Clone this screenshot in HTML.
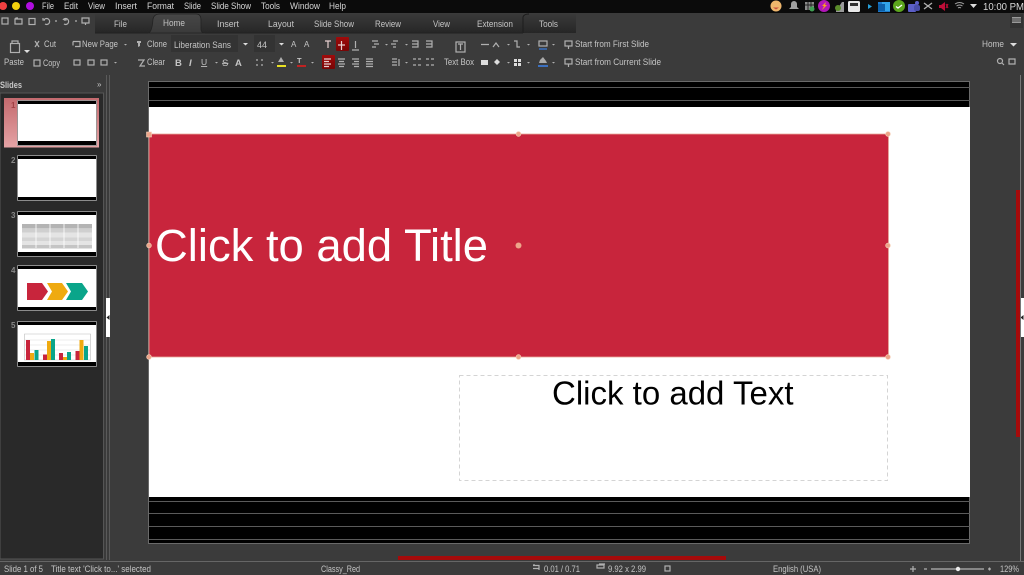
<!DOCTYPE html>
<html><head><meta charset="utf-8"><style>
html,body{margin:0;padding:0;width:1024px;height:575px;overflow:hidden;background:#3b3b3b}
svg{display:block}
text{font-family:"Liberation Sans","Noto Sans CJK SC",sans-serif;font-size:9px;fill:#c4c4c4}
.m text{fill:#d6d6d6}
.ic{stroke:#b0b0b0;stroke-width:1.200;fill:none}
.if{fill:#b0b0b0}
</style></head><body>
<svg width="1024" height="575" viewBox="0 0 1024 575" xmlns="http://www.w3.org/2000/svg">
<defs>
<linearGradient id="tab" x1="0" y1="0" x2="0" y2="1"><stop offset="0" stop-color="#3a3a3a"/><stop offset="1" stop-color="#262626"/></linearGradient>
<linearGradient id="home" x1="0" y1="0" x2="0" y2="1"><stop offset="0" stop-color="#474747"/><stop offset="1" stop-color="#3a3a3a"/></linearGradient>
<linearGradient id="sel" x1="0" y1="0" x2="0" y2="1"><stop offset="0" stop-color="#c46a6e"/><stop offset="1" stop-color="#e5a3a5"/></linearGradient>
<linearGradient id="red" x1="0" y1="0" x2="0" y2="1"><stop offset="0" stop-color="#a00b0b"/><stop offset="1" stop-color="#780606"/></linearGradient>
<filter id="b"><feGaussianBlur stdDeviation="0.35"/></filter>
</defs>
<rect width="1024" height="575" fill="#3b3b3b"/>

<!-- top bar -->
<rect width="1024" height="13" fill="#0b0b0b"/>
<g filter="url(#b)">
<circle cx="3" cy="6" r="4" fill="#f04040"/><circle cx="16" cy="6" r="4" fill="#f2cf0a"/><circle cx="30" cy="6" r="4" fill="#b010e0"/>
<g class="m">
<text x="42" y="9" textLength="12" lengthAdjust="spacingAndGlyphs">File</text>
<text x="64" y="9" textLength="14" lengthAdjust="spacingAndGlyphs">Edit</text>
<text x="88" y="9" textLength="17" lengthAdjust="spacingAndGlyphs">View</text>
<text x="115" y="9" textLength="22" lengthAdjust="spacingAndGlyphs">Insert</text>
<text x="147" y="9" textLength="27" lengthAdjust="spacingAndGlyphs">Format</text>
<text x="184" y="9" textLength="17" lengthAdjust="spacingAndGlyphs">Slide</text>
<text x="211" y="9" textLength="40" lengthAdjust="spacingAndGlyphs">Slide Show</text>
<text x="261" y="9" textLength="19" lengthAdjust="spacingAndGlyphs">Tools</text>
<text x="290" y="9" textLength="30" lengthAdjust="spacingAndGlyphs">Window</text>
<text x="329" y="9" textLength="17" lengthAdjust="spacingAndGlyphs">Help</text>
</g>
<!-- tray -->
<circle cx="776" cy="6" r="5.500" fill="#eeb66c"/><path d="M773 7.500h6l-3 2z" fill="#c8503c"/>
<path d="M789 9h10l-2-2V4a3 3 0 0 0-6 0v3z" fill="#a0a0a0"/>
<rect x="805" y="2" width="9" height="8" fill="#8a8a8a"/><path d="M805 5h9M808 2v8M811 2v6" stroke="#222"/><circle cx="812" cy="9" r="2.500" fill="#3fa052"/>
<circle cx="824" cy="6" r="6" fill="#b016b8"/><path d="M826 2l-4 4h2l-2 4 5-5h-2z" fill="#f5a020"/>
<path d="M836 11l6-9h2v10h-8z" fill="#9a9a9a"/><circle cx="838" cy="8" r="3" fill="#5a8c2a"/>
<rect x="848" y="1" width="12" height="11" rx="1.500" fill="#e8e8e8"/><rect x="850" y="3" width="8" height="3" fill="#333"/>
<path d="M868 4l4 2.500-4 2.500z" fill="#26a0da"/>
<rect x="878" y="2" width="12" height="10" fill="#1c78c8"/><rect x="882" y="2" width="8" height="9" fill="#30a4e8"/><rect x="878" y="4" width="7" height="7" fill="#0f5ea8"/>
<circle cx="899" cy="6" r="6" fill="#5ba61e"/><path d="M896 6.500l2 1.500 4-3" stroke="#fff" stroke-width="1.300" fill="none"/>
<circle cx="917" cy="3" r="2" fill="#5b5fc7"/><rect x="908" y="4" width="8" height="8" rx="1" fill="#5b5fc7"/><rect x="914" y="5" width="6" height="6" rx="2" fill="#4a4ea8"/>
<path d="M924 9l8-6M924 3l8 6" stroke="#b0b0b0" stroke-width="1.300"/>
<path d="M939 5h2l4-3v9l-4-3h-2z" fill="#c01038"/><path d="M946 4l2 4M948 4l-2 4" stroke="#c01038"/>
<path d="M955 4q4.500-3 9 0M956.500 6q3-2 6 0M958 8q1.500-1 3 0" stroke="#a0a0a0" fill="none"/>
<path d="M970 4h7l-3.500 4z" fill="#dcdcdc"/>
<text x="983" y="10" textLength="41" lengthAdjust="spacingAndGlyphs" style="font-size:10px;fill:#d8d8d8">10:00 PM</text>
<!-- quick access -->
<g class="ic"><rect x="2" y="18" width="6" height="6"/><path d="M15 19h7v5h-7zM15 19l1-1h2"/><rect x="29" y="18.500" width="6" height="6"/><path d="M44 20a3 3 0 1 1 1 4M43 18v2h2M55 21h2M64 24a3 3 0 1 0-1-4M66 18v2h-2M75 21h2M82 18h7v5h-7zM85.500 23v2"/></g>
</g>

<!-- tabs -->
<path d="M95 14H576V33H95z" fill="url(#tab)"/>
<path d="M148 33q4 0 5-14q1-5 7-5h36q5 0 5 6v9q0 4 4 4z" fill="url(#home)" stroke="#222" stroke-width=".8"/>
<path d="M523 33v-16q1-3 6-3" stroke="#1c1c1c" fill="none"/>
<path d="M95 33H148M205 33H523" stroke="#222"/>
<g filter="url(#b)">
<text x="114" y="27" textLength="13" lengthAdjust="spacingAndGlyphs">File</text>
<text x="163" y="26" textLength="22" lengthAdjust="spacingAndGlyphs">Home</text>
<text x="217" y="27" textLength="22" lengthAdjust="spacingAndGlyphs">Insert</text>
<text x="268" y="27" textLength="26" lengthAdjust="spacingAndGlyphs">Layout</text>
<text x="314" y="27" textLength="40" lengthAdjust="spacingAndGlyphs">Slide Show</text>
<text x="375" y="27" textLength="26" lengthAdjust="spacingAndGlyphs">Review</text>
<text x="433" y="27" textLength="17" lengthAdjust="spacingAndGlyphs">View</text>
<text x="477" y="27" textLength="36" lengthAdjust="spacingAndGlyphs">Extension</text>
<text x="539" y="27" textLength="19" lengthAdjust="spacingAndGlyphs">Tools</text>
</g>
<rect x="1010" y="14" width="13" height="14" fill="#333"/><path d="M1012 17h9v6h-9z" fill="#999"/><path d="M1012 19h9M1012 21h9" stroke="#444"/>

<!-- toolbar -->
<rect x="171" y="35" width="67" height="17" fill="#333"/>
<rect x="254" y="35" width="21" height="17" fill="#333"/>
<rect x="336" y="37" width="13" height="14" rx="1" fill="url(#red)"/>
<rect x="322" y="55" width="13" height="14" rx="1" fill="url(#red)"/>
<g filter="url(#b)">
<text x="44" y="47" textLength="12" lengthAdjust="spacingAndGlyphs">Cut</text>
<text x="82" y="47" textLength="36" lengthAdjust="spacingAndGlyphs">New Page</text>
<text x="147" y="47" textLength="20" lengthAdjust="spacingAndGlyphs">Clone</text>
<text x="174" y="48" textLength="57" lengthAdjust="spacingAndGlyphs">Liberation Sans</text>
<text x="257" y="48" textLength="10" lengthAdjust="spacingAndGlyphs">44</text>
<text x="4" y="65" textLength="20" lengthAdjust="spacingAndGlyphs">Paste</text>
<text x="43" y="66" textLength="17" lengthAdjust="spacingAndGlyphs">Copy</text>
<text x="147" y="65" textLength="18" lengthAdjust="spacingAndGlyphs">Clear</text>
<text x="444" y="65" textLength="30" lengthAdjust="spacingAndGlyphs">Text Box</text>
<text x="575" y="47" textLength="74" lengthAdjust="spacingAndGlyphs">Start from First Slide</text>
<text x="575" y="65" textLength="86" lengthAdjust="spacingAndGlyphs">Start from Current Slide</text>
<text x="982" y="47" textLength="22" lengthAdjust="spacingAndGlyphs">Home</text>

<g class="ic">
<rect x="10.500" y="43.500" width="9" height="9"/><path d="M12 43v-2h6v2"/>
<path d="M35 41l4 6M39 41l-4 6"/>
<path d="M73 41.500h7v5h-5M73 41.500v4"/>
<rect x="34" y="60" width="6" height="6"/>
<rect x="74" y="60" width="6" height="5"/><rect x="88" y="60" width="6" height="5"/><rect x="101" y="60" width="6" height="5"/>
<path d="M325 41h6M328 41v7M341.500 41v9M338 45h7" stroke="#e8d0d0"/>
<path d="M352 50h7M355.500 41v7"/>
<path d="M372 41h6M374 44h5M372 47h4M393 41h5M391 44h5M393 47h3M412 41h6v6h-6M426 41h6v6h-6M412 44h6M426 44h6"/>
<rect x="456" y="42" width="9" height="10"/><path d="M458 44h5M460.500 44v6"/>
<path d="M481 44.500h8M493 47l3-4 3 4M514 41h3v6h3"/>
<rect x="539" y="41" width="8" height="5"/><path d="M539 49h8" stroke="#3a70c0" stroke-width="1.500"/>
<rect x="565" y="41" width="7" height="5"/><path d="M568.500 46v3"/>
<rect x="565" y="59" width="7" height="5"/><path d="M568.500 64v3"/>
<path d="M256 60h2M261 60h2M256 65h2M261 65h2"/>
<path d="M324 59h7M324 61.500h5M324 64h7M324 66.500h5" stroke="#e8d0d0"/>
<path d="M338 59h7M339 61.500h5M338 64h7M339 66.500h5M352 59h7M354 61.500h5M352 64h7M354 66.500h5M366 59h7M366 61.500h7M366 64h7M366 66.500h7"/>
<path d="M392 59h5M392 62h5M392 65h5M399 59v7M413 59h3M418 59h3M413 65h3M418 65h3M426 59h3M431 59h3M426 65h3M431 65h3"/>
<path d="M138 60h6l-4 6h5"/>
<circle cx="1000" cy="61" r="2.500"/><path d="M1002 63l2 2M1009 59h6v5h-6z"/>
</g>
<text x="175" y="66" style="font-weight:bold;font-size:9.500px">B</text>
<text x="189" y="66" style="font-style:italic;font-weight:bold;font-size:9.500px">I</text>
<text x="201" y="65" style="font-size:8.500px;text-decoration:underline">U</text>
<text x="222" y="66" style="font-size:9.500px;text-decoration:line-through">S</text>
<text x="235" y="66" style="font-weight:bold;font-size:9.500px">A</text>
<text x="291" y="47" style="font-size:8px">A</text>
<text x="304" y="47" style="font-size:8px">A</text>
<path d="M137 41h4v2h-4zM138 43h2v3l-2 1z" class="if"/>
<path d="M278 62l3-5 3 5z" class="if"/><rect x="277" y="65" width="9" height="2" fill="#e8e020"/>
<text x="297" y="63" style="font-size:7.500px;font-weight:bold">T</text><rect x="297" y="65" width="9" height="2" fill="#c02020"/>
<rect x="481" y="60" width="7" height="5" fill="#ddd"/><path d="M497 59l3 3-3 3-3-3z" fill="#ddd"/>
<path d="M514 59h7v7h-7z" fill="#ddd"/><path d="M514 62.500h7M517.500 59v7" stroke="#333"/>
<path d="M540 60l3-3 3 4 1 2h-8z" fill="#aaa"/><rect x="538" y="65" width="10" height="2" fill="#3a70c0"/>
<g class="if">
<path d="M243 43h5l-2.500 2.500zM279 43h5l-2.500 2.500zM24 50h6l-3 3zM1010 43h7l-3.500 3.500z" fill="#ddd"/>
<path d="M124 44h3l-1.500 1.500zM385 44h3l-1.500 1.500zM405 44h3l-1.500 1.500zM507 44h3l-1.500 1.500zM527 44h3l-1.500 1.500zM552 44h3l-1.500 1.500z"/>
<path d="M114 62h3l-1.500 1.500zM215 62h3l-1.500 1.500zM271 62h3l-1.500 1.500zM290 62h3l-1.500 1.500zM311 62h3l-1.500 1.500zM405 62h3l-1.500 1.500zM507 62h3l-1.500 1.500zM527 62h3l-1.500 1.500zM552 62h3l-1.500 1.500z"/>
</g>
</g>

<!-- left panel -->
<text x="0" y="88" textLength="22" lengthAdjust="spacingAndGlyphs" style="font-weight:bold;font-size:9px;fill:#c8c8c8">Slides</text>
<text x="97" y="87" style="font-size:8px">»</text>
<rect x="0" y="93" width="103.500" height="466" fill="#292929" stroke="#555"/>
<path d="M106.500 75V560M109.500 75V560" stroke="#5a5a5a"/>
<rect x="4" y="98" width="95" height="49.500" fill="url(#sel)"/>
<text x="11" y="108" style="fill:#a04044;font-size:8px;font-weight:bold">1</text>
<text x="11" y="163" style="font-size:8px;fill:#888;font-weight:bold">2</text>
<text x="11" y="218" style="font-size:8px;fill:#888;font-weight:bold">3</text>
<text x="11" y="273" style="font-size:8px;fill:#888;font-weight:bold">4</text>
<text x="11" y="328" style="font-size:8px;fill:#888;font-weight:bold">5</text>
<!-- thumbs -->
<g stroke="#8a8a8a" stroke-width=".8">
<rect x="17.500" y="100.500" width="79" height="45" fill="#fff"/>
<rect x="17.500" y="155.500" width="79" height="45" fill="#fff"/>
<rect x="17.500" y="211.500" width="79" height="45" fill="#fff"/>
<rect x="17.500" y="265.500" width="79" height="45" fill="#fff"/>
<rect x="17.500" y="321.500" width="79" height="45" fill="#fff"/>
</g>
<g fill="#000">
<rect x="18" y="101" width="78" height="3"/><rect x="18" y="141" width="78" height="4"/>
<rect x="18" y="156" width="78" height="3"/><rect x="18" y="197" width="78" height="3"/>
<rect x="18" y="212" width="78" height="3"/><rect x="18" y="252" width="78" height="4"/>
<rect x="18" y="266" width="78" height="3"/><rect x="18" y="307" width="78" height="3"/>
<rect x="18" y="322" width="78" height="3"/><rect x="18" y="362" width="78" height="4"/>
</g>
<!-- table thumb -->
<rect x="22" y="224" width="70" height="24" fill="#e4e4e4"/>
<rect x="22" y="224" width="70" height="4.500" fill="#b4b4b4"/><rect x="22" y="229" width="70" height="3.500" fill="#cfcfcf"/><rect x="22" y="237.500" width="70" height="3.500" fill="#d4d4d4"/><rect x="22" y="245" width="70" height="3.500" fill="#c4c4c4"/>
<path d="M36 224v24M50 224v24M64 224v24M78 224v24" stroke="#fff" stroke-width=".8"/>
<!-- arrows thumb -->
<path d="M27 283h15l6 8.500-6 8.500h-15z" fill="#c8253c"/>
<path d="M47 283h15l6 8.500-6 8.500h-15l5-8.500z" fill="#efaa10"/>
<path d="M66 283h16l6 8.500-6 8.500h-16l5-8.500z" fill="#0aa58a"/>
<!-- chart thumb -->
<path d="M24.500 334h66v26h-66z" fill="none" stroke="#bbb" stroke-width=".6"/>
<path d="M25 340h65M25 345h65M25 350h65M25 355h65" stroke="#ddd" stroke-width=".6"/>
<rect x="26" y="340" width="4" height="20" fill="#c8253c"/><rect x="30" y="353" width="4" height="7" fill="#efaa10"/><rect x="34.500" y="350" width="4" height="10" fill="#0aa58a"/>
<rect x="43" y="354.500" width="4" height="5.500" fill="#c8253c"/><rect x="47" y="341" width="4" height="19" fill="#efaa10"/><rect x="51" y="339" width="4" height="21" fill="#0aa58a"/>
<rect x="59" y="353" width="4" height="7" fill="#c8253c"/><rect x="63" y="357" width="4" height="3" fill="#efaa10"/><rect x="67" y="352" width="4" height="8" fill="#0aa58a"/>
<rect x="75.500" y="351" width="4" height="9" fill="#c8253c"/><rect x="79.500" y="340" width="4" height="20" fill="#efaa10"/><rect x="84" y="346" width="4" height="14" fill="#0aa58a"/>
<!-- collapse handles -->
<rect x="106" y="298" width="4" height="39" fill="#fff"/><path d="M109.500 315v5l-3-2.500z" fill="#222"/>
<rect x="1020" y="298" width="4" height="39" fill="#fff"/><path d="M1023.500 315v5l-3-2.500z" fill="#222"/>
<path d="M1020.500 75V561" stroke="#777"/>

<!-- slide -->
<rect x="148.500" y="81.500" width="821" height="462" fill="#000" stroke="#6a6a6a"/>
<rect x="149" y="107" width="821" height="390" fill="#fff"/>
<path d="M149 87.500h821M149 100.500h821M149 501.500h821M149 513.500h821M149 526.500h821M149 539.500h821" stroke="#5a5a5a"/>
<rect x="149" y="134" width="739.500" height="223" fill="#c8253c" stroke="#e8a99a" stroke-width=".8"/>
<text x="155" y="261" style='font-family:"Liberation Sans",sans-serif;font-size:45.400px;fill:#fff'>Click to add Title</text>
<rect x="459.500" y="375.500" width="428" height="105" fill="none" stroke="#d4d4d4" stroke-dasharray="4 3"/>
<text x="552" y="404.500" style='font-family:"Liberation Sans",sans-serif;font-size:33px;fill:#000'>Click to add Text</text>
<g fill="#eda58a" stroke="#f6d0b8" stroke-width=".6">
<rect x="146.500" y="132" width="5" height="5"/><circle cx="518.500" cy="134" r="2.400"/><circle cx="888" cy="134" r="2.400"/>
<circle cx="149" cy="245.500" r="2.400"/><circle cx="888" cy="245.500" r="2.400"/>
<circle cx="149" cy="357" r="2.400"/><circle cx="518.500" cy="357" r="2.400"/><circle cx="888" cy="357" r="2.400"/>
</g>
<circle cx="518.500" cy="245.500" r="3" fill="#eda58a"/>

<!-- scrollbars -->
<rect x="398" y="556" width="328" height="4" fill="#a50a0a"/>
<rect x="1016" y="190" width="4" height="247" fill="#a50a0a"/>

<!-- status -->
<path d="M0 561.500H1024" stroke="#666"/>
<g filter="url(#b)">
<text x="4" y="572" textLength="39" lengthAdjust="spacingAndGlyphs">Slide 1 of 5</text>
<text x="51" y="572" textLength="100" lengthAdjust="spacingAndGlyphs">Title text 'Click to...' selected</text>
<text x="321" y="572" textLength="39" lengthAdjust="spacingAndGlyphs">Classy_Red</text>
<text x="544" y="572" textLength="36" lengthAdjust="spacingAndGlyphs">0.01 / 0.71</text>
<text x="608" y="572" textLength="38" lengthAdjust="spacingAndGlyphs">9.92 x 2.99</text>
<text x="773" y="572" textLength="48" lengthAdjust="spacingAndGlyphs">English (USA)</text>
<text x="1000" y="572" textLength="19" lengthAdjust="spacingAndGlyphs">129%</text>
<g class="ic">
<path d="M533 565.500h6v3h-6M534 564v1M539 568v2M597 565h7v3h-7zM599 564h6"/>
<rect x="665" y="566" width="5" height="5"/>
<path d="M910 569h6M913 566v6M924 569h3M988 569h3M989.500 567.500v3"/>
</g>
<path d="M931 569H984" stroke="#b4b4b4" stroke-width="1.200"/><circle cx="958" cy="569" r="2.200" fill="#eee"/>
</g>
</svg>
</body></html>
